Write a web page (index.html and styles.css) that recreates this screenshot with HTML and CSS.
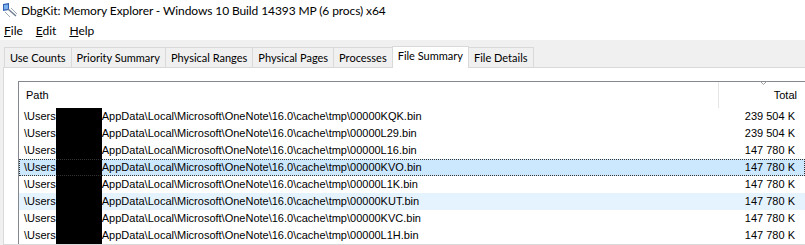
FILE: index.html
```html
<!DOCTYPE html>
<html lang="en">
<head>
    <meta charset="UTF-8">
    <title>DbgKit: Memory Explorer</title>
    <link rel="stylesheet" href="styles.css">
</head>
<body>
    <div class="titlebar">
        <svg class="appicon" width="16" height="16" viewBox="0 0 16 16">
            <path d="M1 2 L7 1 L7 8 L1 9 Z" fill="#2f5fb3"/>
            <path d="M2 3 L6 2.5 L6 7 L2 7.5 Z" fill="#7fb2ec"/>
            <path d="M6 7 L14 14" stroke="#6a7a8c" stroke-width="1.4"/>
            <path d="M9 6 L15 12" stroke="#9aa8b8" stroke-width="1"/>
            <path d="M3 10 L8 15" stroke="#9aa8b8" stroke-width="1"/>
        </svg>
        <span class="title">DbgKit: Memory Explorer - Windows 10 Build 14393 MP (6 procs) x64</span>
    </div>
    <div class="menubar">
        <span class="menu"><u>F</u>ile</span>
        <span class="menu"><u>E</u>dit</span>
        <span class="menu"><u>H</u>elp</span>
    </div>
    <div class="client">
        <div class="tabs">
            <div class="tab">Use Counts</div>
            <div class="tab">Priority Summary</div>
            <div class="tab">Physical Ranges</div>
            <div class="tab">Physical Pages</div>
            <div class="tab">Processes</div>
            <div class="tab active">File Summary</div>
            <div class="tab">File Details</div>
        </div>
        <div class="panel">
            <div class="list">
                <div class="header">
                    <div class="col-path">Path</div>
                    <div class="col-total">
                        <svg class="sort" width="7" height="4" viewBox="0 0 7 4">
                            <path d="M0.5 0.5 L3.5 3.5 L6.5 0.5" fill="none" stroke="#a0a0a0" stroke-width="1"/>
                        </svg>
                        Total
                    </div>
                </div>
                <div class="row">
                    <div class="col-path">\Users<span class="redact"></span>AppData\Local\Microsoft\OneNote\16.0\cache\tmp\00000KQK.bin</div>
                    <div class="col-total">239 504 K</div>
                </div>
                <div class="row">
                    <div class="col-path">\Users<span class="redact"></span>AppData\Local\Microsoft\OneNote\16.0\cache\tmp\00000L29.bin</div>
                    <div class="col-total">239 504 K</div>
                </div>
                <div class="row">
                    <div class="col-path">\Users<span class="redact"></span>AppData\Local\Microsoft\OneNote\16.0\cache\tmp\00000L16.bin</div>
                    <div class="col-total">147 780 K</div>
                </div>
                <div class="row selected">
                    <div class="col-path">\Users<span class="redact"></span>AppData\Local\Microsoft\OneNote\16.0\cache\tmp\00000KVO.bin</div>
                    <div class="col-total">147 780 K</div>
                </div>
                <div class="row">
                    <div class="col-path">\Users<span class="redact"></span>AppData\Local\Microsoft\OneNote\16.0\cache\tmp\00000L1K.bin</div>
                    <div class="col-total">147 780 K</div>
                </div>
                <div class="row hover">
                    <div class="col-path">\Users<span class="redact"></span>AppData\Local\Microsoft\OneNote\16.0\cache\tmp\00000KUT.bin</div>
                    <div class="col-total">147 780 K</div>
                </div>
                <div class="row">
                    <div class="col-path">\Users<span class="redact"></span>AppData\Local\Microsoft\OneNote\16.0\cache\tmp\00000KVC.bin</div>
                    <div class="col-total">147 780 K</div>
                </div>
                <div class="row">
                    <div class="col-path">\Users<span class="redact"></span>AppData\Local\Microsoft\OneNote\16.0\cache\tmp\00000L1H.bin</div>
                    <div class="col-total">147 780 K</div>
                </div>
            </div>
        </div>
    </div>
</body>
</html>
```

FILE: styles.css
```css
html, body {
    margin: 0;
    padding: 0;
    width: 805px;
    height: 245px;
    overflow: hidden;
}
body {
    font-family: Lato, "Liberation Sans", sans-serif;
    font-size: 12px;
    color: #000;
    background-color: #fff;
}
.titlebar {
    height: 20px;
    display: flex;
    align-items: center;
}
.title {
    letter-spacing: -0.1px;
}
.appicon {
    margin-left: 2px;
    margin-right: 3px;
}
.menubar {
    height: 20px;
    display: flex;
    align-items: center;
    padding-left: 4px;
    gap: 13px;
}
.menu u {
    text-decoration-thickness: 1px;
}
.client {
    background-color: #f0f0f0;
    padding: 7px 0 0 3px;
    height: 205px;
    box-sizing: border-box;
    overflow: hidden;
}
.tabs {
    display: flex;
    padding-left: 1px;
    height: 20px;
    align-items: flex-end;
    font-size: 11px;
}
.tab {
    height: 20px;
    box-sizing: border-box;
    padding: 0 5px;
    line-height: 19px;
    border: 1px solid #d9d9d9;
    border-bottom: none;
    border-left: none;
    background-color: #f0f0f0;
    white-space: nowrap;
}
.tab:first-child {
    border-left: 1px solid #d9d9d9;
}
.tab.active {
    height: 22px;
    line-height: 18px;
    margin-bottom: -1px;
    background-color: #fff;
    border-left: 1px solid #d9d9d9;
    margin-left: -1px;
    position: relative;
    z-index: 1;
}
.panel {
    background-color: #fff;
    border: 1px solid #d9d9d9;
    border-right: none;
    height: 178px;
    padding: 13px 0 0 14px;
    box-sizing: border-box;
    overflow: hidden;
}
.list {
    border-top: 1px solid #828790;
    border-left: 1px solid #828790;
    height: 164px;
    font-family: "Liberation Sans", sans-serif;
    font-size: 11px;
}
.header {
    display: flex;
    height: 26px;
    align-items: center;
}
.header .col-path {
    padding-left: 7px;
    border-right: 1px solid #e5e5e5;
    height: 26px;
    line-height: 26px;
    box-sizing: border-box;
}
.header .col-total {
    position: relative;
    padding-right: 6px;
}
.sort {
    position: absolute;
    top: -8px;
    left: 41px;
}
.col-path {
    width: 700px;
    box-sizing: border-box;
    display: flex;
    white-space: nowrap;
}
.col-total {
    width: 84px;
    text-align: right;
    padding-right: 8px;
    box-sizing: border-box;
}
.row {
    display: flex;
    height: 17px;
    line-height: 17px;
    box-sizing: border-box;
}
.row .col-path {
    padding-left: 5px;
}
.row.selected {
    background-color: #cce8ff;
    outline: 1px dotted #333;
    outline-offset: -1px;
}
.row.hover {
    background-color: #e5f3ff;
}
.redact {
    display: inline-block;
    width: 46px;
    height: 17px;
    background-color: #000;
}
```
